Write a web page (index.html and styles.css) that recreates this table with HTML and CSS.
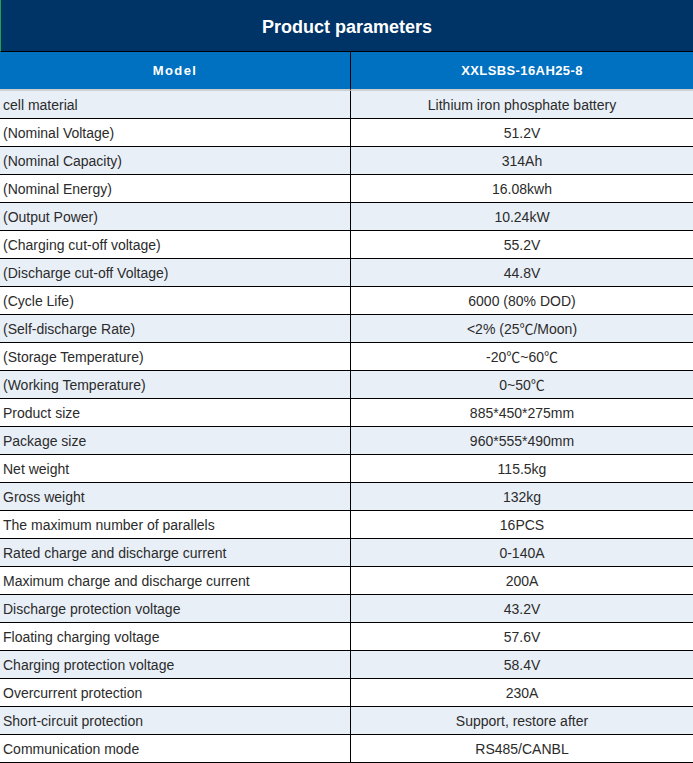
FILE: index.html
```html
<!DOCTYPE html>
<html lang="en">
<head>
<meta charset="utf-8">
<title>Product parameters</title>
<link rel="stylesheet" href="styles.css">
</head>
<body>
<div class="sheet">
  <div class="title">Product parameters</div>
  <div class="grid">
    <div class="hcell hmodel">Model</div>
    <div class="hcell hval">XXLSBS-16AH25-8</div>

    <div class="cell key alt">cell material</div><div class="cell val alt">Lithium iron phosphate battery</div>
    <div class="cell key">(Nominal Voltage)</div><div class="cell val">51.2V</div>
    <div class="cell key alt">(Nominal Capacity)</div><div class="cell val alt">314Ah</div>
    <div class="cell key">(Nominal Energy)</div><div class="cell val">16.08kwh</div>
    <div class="cell key alt">(Output Power)</div><div class="cell val alt">10.24kW</div>
    <div class="cell key">(Charging cut-off voltage)</div><div class="cell val">55.2V</div>
    <div class="cell key alt">(Discharge cut-off Voltage)</div><div class="cell val alt">44.8V</div>
    <div class="cell key">(Cycle Life)</div><div class="cell val">6000 (80% DOD)</div>
    <div class="cell key alt">(Self-discharge Rate)</div><div class="cell val alt">&lt;2% (25℃/Moon)</div>
    <div class="cell key">(Storage Temperature)</div><div class="cell val">-20℃~60℃</div>
    <div class="cell key alt">(Working Temperature)</div><div class="cell val alt">0~50℃</div>
    <div class="cell key">Product size</div><div class="cell val">885*450*275mm</div>
    <div class="cell key alt">Package size</div><div class="cell val alt">960*555*490mm</div>
    <div class="cell key">Net weight</div><div class="cell val">115.5kg</div>
    <div class="cell key alt">Gross weight</div><div class="cell val alt">132kg</div>
    <div class="cell key">The maximum number of parallels</div><div class="cell val">16PCS</div>
    <div class="cell key alt">Rated charge and discharge current</div><div class="cell val alt">0-140A</div>
    <div class="cell key">Maximum charge and discharge current</div><div class="cell val">200A</div>
    <div class="cell key alt">Discharge protection voltage</div><div class="cell val alt">43.2V</div>
    <div class="cell key">Floating charging voltage</div><div class="cell val">57.6V</div>
    <div class="cell key alt">Charging protection voltage</div><div class="cell val alt">58.4V</div>
    <div class="cell key">Overcurrent protection</div><div class="cell val">230A</div>
    <div class="cell key alt">Short-circuit protection</div><div class="cell val alt">Support, restore after</div>
    <div class="cell key">Communication mode</div><div class="cell val">RS485/CANBL</div>
  </div>
</div>
</body>
</html>
```

FILE: styles.css
```css
* {
  box-sizing: border-box;
}

html, body {
  margin: 0;
  padding: 0;
  background: #ffffff;
}

body {
  font-family: "Liberation Sans", Arial, "Noto Sans CJK SC", sans-serif;
  color: #2b2b2b;
}

.sheet {
  width: 693px;
}

.title {
  height: 52px;
  padding-top: 3px;
  line-height: 48px;
  background: #003466;
  border-left: 1px solid #24a04e;
  border-bottom: 1px solid #000000;
  color: #ffffff;
  font-size: 18px;
  font-weight: bold;
  text-align: center;
}

.grid {
  display: grid;
  grid-template-columns: 350px 343px;
}

.hcell {
  height: 39px;
  padding-top: 1px;
  line-height: 36px;
  background: #0070c0;
  border-bottom: 2px solid #cfcfcf;
  color: #ffffff;
  font-size: 13px;
  font-weight: bold;
  text-align: center;
}

.hmodel {
  letter-spacing: 1.4px;
}

.hval {
  border-left: 1px solid #000000;
  letter-spacing: 0.4px;
}

.cell {
  height: 28px;
  padding-top: 1px;
  line-height: 26px;
  border-bottom: 1px solid #000000;
  font-size: 14px;
  background: #ffffff;
  white-space: nowrap;
}

.cell.alt {
  background: #e9eff7;
}

.key {
  padding-left: 3px;
}

.val {
  border-left: 1px solid #000000;
  text-align: center;
}
```
